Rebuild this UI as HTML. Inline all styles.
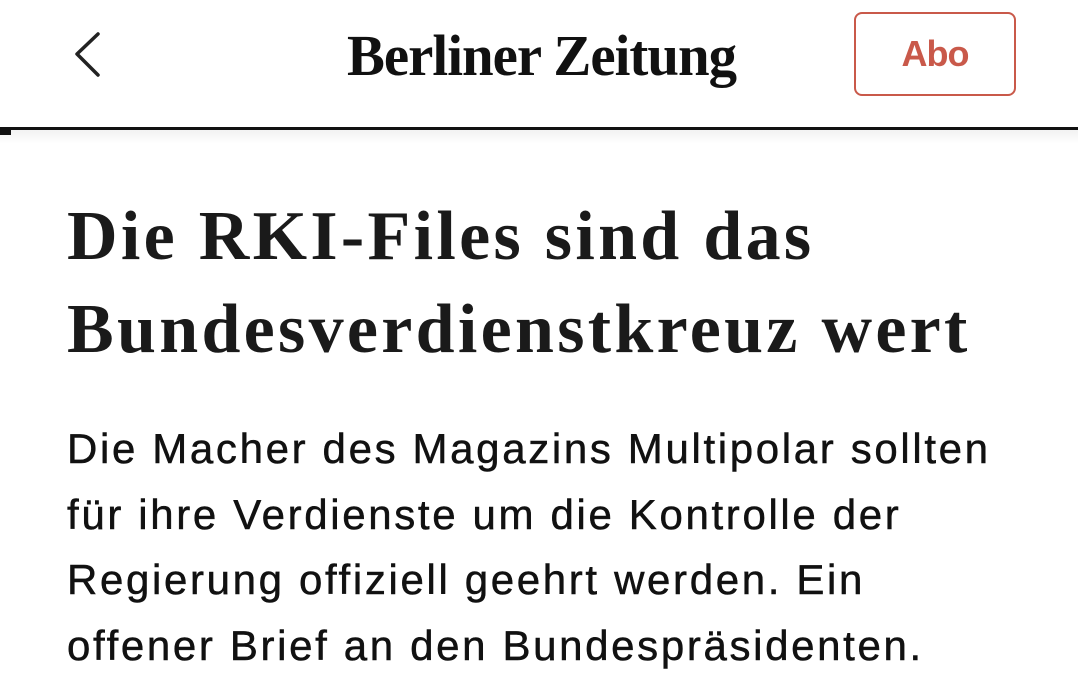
<!DOCTYPE html>
<html><head><meta charset="utf-8"><style>
body{margin:0;width:1078px;height:687px;overflow:hidden;background:#fff;position:relative;font-family:"Liberation Sans",sans-serif}
.back{position:absolute;left:72px;top:30px}
.logo{position:absolute;left:347px;top:22px;height:70px;font-family:"Liberation Serif",serif;font-weight:bold;font-size:58px;color:#111;white-space:nowrap;transform-origin:left top;transform:scaleX(0.98);letter-spacing:-1px}
.abo{position:absolute;left:854px;top:12px;width:158px;height:80px;border:2px solid #c9594a;border-radius:8px;color:#c9594a;font-weight:bold;font-size:36px;display:flex;align-items:center;justify-content:center;box-sizing:content-box;letter-spacing:-1px}
.line{position:absolute;left:0;top:127px;width:1078px;height:3px;background:#111}
.sq{position:absolute;left:0;top:130px;width:11px;height:5px;background:#111}
.shadow{position:absolute;left:0;top:130px;width:1078px;height:14px;background:linear-gradient(#f2f2f2,#fff)}
h1{position:absolute;left:67px;top:190px;margin:0;font-family:"Liberation Serif",serif;font-weight:bold;font-size:70px;line-height:93px;color:#1a1a1a;width:1050px;letter-spacing:3.3px}
p{position:absolute;left:67px;top:416px;margin:0;font-size:42px;line-height:65.5px;color:#111;width:1050px;letter-spacing:2.65px;-webkit-text-stroke:0.5px #111}
</style></head><body>
<svg class="back" width="30" height="50" viewBox="0 0 30 50"><path d="M26 4 L5 24 L26 45" fill="none" stroke="#222" stroke-width="3.5" stroke-linecap="round" stroke-linejoin="round"/></svg>
<div class="logo">Berliner Zeitung</div>
<div class="abo">Abo</div>
<div class="shadow"></div>
<div class="line"></div>
<div class="sq"></div>
<h1>Die RKI-Files sind das<br>Bundesverdienstkreuz wert</h1>
<p>Die Macher des Magazins Multipolar sollten<br>für ihre Verdienste um die Kontrolle der<br>Regierung offiziell geehrt werden. Ein<br>offener Brief an den Bundespräsidenten.</p>
</body></html>
